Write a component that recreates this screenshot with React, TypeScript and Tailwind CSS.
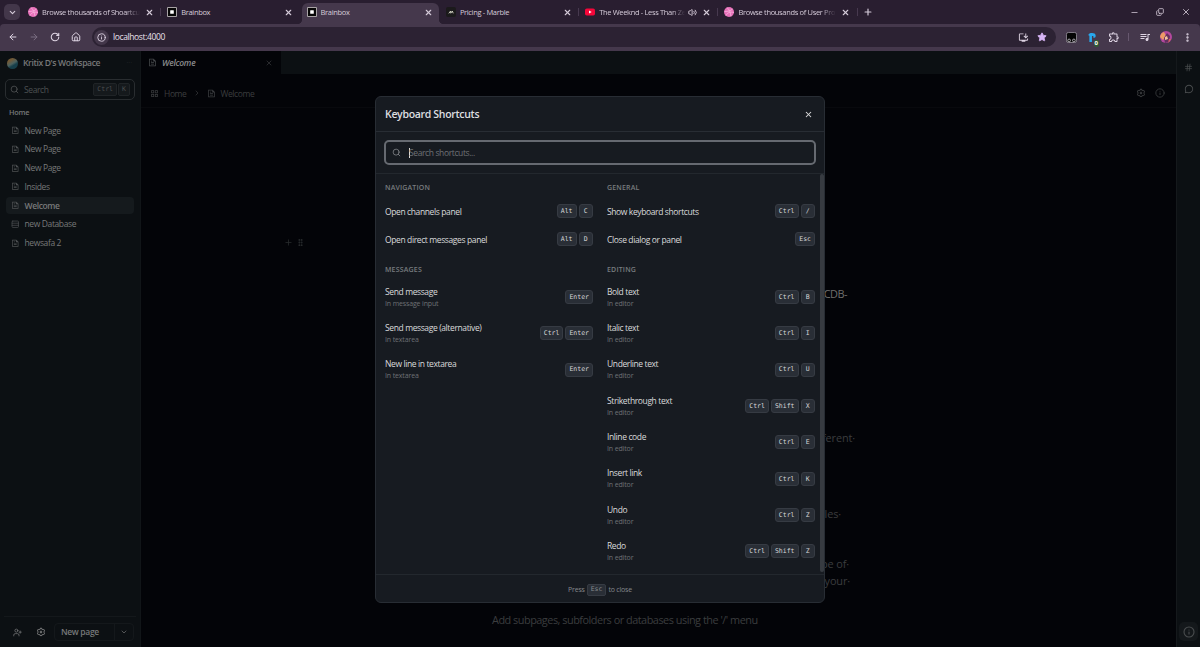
import type { ReactNode } from "react";
import clsx from "clsx";
import {
    ArrowLeft,
    ArrowRight,
    ChevronDown,
    ChevronRight,
    Copy,
    EllipsisVertical,
    GripVertical,
    Hash,
    House,
    Info,
    Minus,
    Plus,
    RotateCw,
    Rows3,
    Search,
    Star,
    UserPlus,
    Volume2,
    X,
} from "lucide-react";
import { RiFileTextLine, RiFunctionLine, RiSettings3Line, RiChat3Line } from "react-icons/ri";
import { MdOutlineInstallDesktop, MdOutlineExtension, MdQueueMusic } from "react-icons/md";

type Shortcut = { label: string; hint?: string; keys: string[] };
type Section = { title: string; items: Shortcut[] };

const leftSections: Section[] = [
    {
        title: "NAVIGATION",
        items: [
            { label: "Open channels panel", keys: ["Alt", "C"] },
            { label: "Open direct messages panel", keys: ["Alt", "D"] },
        ],
    },
    {
        title: "MESSAGES",
        items: [
            { label: "Send message", hint: "In message input", keys: ["Enter"] },
            { label: "Send message (alternative)", hint: "In textarea", keys: ["Ctrl", "Enter"] },
            { label: "New line in textarea", hint: "In textarea", keys: ["Enter"] },
        ],
    },
];

const rightSections: Section[] = [
    {
        title: "GENERAL",
        items: [
            { label: "Show keyboard shortcuts", keys: ["Ctrl", "/"] },
            { label: "Close dialog or panel", keys: ["Esc"] },
        ],
    },
    {
        title: "EDITING",
        items: [
            { label: "Bold text", hint: "In editor", keys: ["Ctrl", "B"] },
            { label: "Italic text", hint: "In editor", keys: ["Ctrl", "I"] },
            { label: "Underline text", hint: "In editor", keys: ["Ctrl", "U"] },
            { label: "Strikethrough text", hint: "In editor", keys: ["Ctrl", "Shift", "X"] },
            { label: "Inline code", hint: "In editor", keys: ["Ctrl", "E"] },
            { label: "Insert link", hint: "In editor", keys: ["Ctrl", "K"] },
            { label: "Undo", hint: "In editor", keys: ["Ctrl", "Z"] },
            { label: "Redo", hint: "In editor", keys: ["Ctrl", "Shift", "Z"] },
        ],
    },
];

const pages = [
    { name: "New Page" },
    { name: "New Page" },
    { name: "New Page" },
    { name: "Insides" },
    { name: "Welcome", active: true },
    { name: "new Database", database: true },
    { name: "hewsafa 2" },
];

function DribbbleIcon() {
    return (
        <svg viewBox="0 0 20 20" className="size-[10px]">
            <circle cx="10" cy="10" r="10" fill="#e871ba" />
            <path d="M6 1c5 5 7 10 8 18M1 9c7 0 12-1 16-5M4 17c3-6 8-8 16-6" fill="none" stroke="#f7b4dd" strokeWidth="1.6" />
        </svg>
    );
}

function BrainboxIcon() {
    return (
        <svg viewBox="0 0 10 10" className="size-[10px]">
            <rect width="10" height="10" rx="1" fill="#a9a4a6" />
            <rect x="1" y="1" width="8" height="8" fill="#070707" />
            <rect x="3.2" y="3.2" width="3.6" height="3.6" rx="0.5" fill="#fff" />
        </svg>
    );
}

function MarbleIcon() {
    return (
        <svg viewBox="0 0 10 10" className="size-[10px]">
            <rect width="10" height="10" rx="2" fill="#1b1a1b" />
            <path d="M2.8 6.4 4.6 4 4.8 6.2 6.3 4 7.2 6.3" fill="none" stroke="#d8d8c8" strokeWidth="0.9" />
        </svg>
    );
}

function YoutubeIcon() {
    return (
        <svg viewBox="0 0 10 10" className="size-[10px]">
            <rect y="1.5" width="10" height="7" rx="1.8" fill="#f5073a" />
            <path d="M4 3.4 6.7 5 4 6.6z" fill="#fff" />
        </svg>
    );
}

const browserTabs: { icon: ReactNode; title: string; active?: boolean; audio?: boolean; divider?: boolean; fade?: boolean }[] = [
    { icon: <DribbbleIcon />, title: "Browse thousands of Shoartcut", divider: true, fade: true },
    { icon: <BrainboxIcon />, title: "Brainbox" },
    { icon: <BrainboxIcon />, title: "Brainbox", active: true },
    { icon: <MarbleIcon />, title: "Pricing - Marble", divider: true },
    { icon: <YoutubeIcon />, title: "The Weeknd - Less Than Zer", audio: true, divider: true, fade: true },
    { icon: <DribbbleIcon />, title: "Browse thousands of User Profi", divider: true, fade: true },
];

function TabStrip() {
    return (
        <div className="flex h-6 items-stretch bg-[#291e30] text-[#d5cbd9]">
            <div className="flex w-[22px] items-center pl-1">
                <div className="flex size-4 items-center justify-center rounded-[5px] bg-[#43374a]">
                    <ChevronDown className="size-[9px]" strokeWidth={3} />
                </div>
            </div>
            {browserTabs.map((tab, i) => (
                <div key={i} className="relative flex w-[139.3px] shrink-0 items-center pl-[6px]">
                    {tab.active && (
                        <>
                            <div className="absolute top-[3px] bottom-0 left-px w-[137px] rounded-t-[6px] bg-[#45384c]" />
                            <div className="absolute bottom-0 left-[-4px] size-[5px] bg-[radial-gradient(circle_at_0_0,#291e30_5px,#45384c_5.5px)]" />
                            <div className="absolute bottom-0 left-[138px] size-[5px] bg-[radial-gradient(circle_at_100%_0,#291e30_5px,#45384c_5.5px)]" />
                        </>
                    )}
                    <div className="relative">{tab.icon}</div>
                    <span
                        className={clsx(
                            "relative ml-[4px] overflow-hidden text-[7.5px] leading-3 tracking-[-0.045em] whitespace-nowrap",
                            tab.audio ? "w-[86px]" : "w-[98px]",
                            tab.fade && "[mask-image:linear-gradient(to_right,#000_85%,transparent)]"
                        )}
                    >
                        {tab.title}
                    </span>
                    {tab.audio && <Volume2 className="ml-[3px] size-[9px]" strokeWidth={2.5} />}
                    <X className="relative ml-[5px] size-[9px]" strokeWidth={3} />
                    {tab.divider && <div className="absolute top-2 right-0 h-2 w-px bg-[#47394f]" />}
                </div>
            ))}
            <div className="flex flex-1 items-center pl-[5px]">
                <Plus className="size-[10px]" strokeWidth={2.8} />
            </div>
            <div className="flex items-center gap-[17px] pr-[9px]">
                <Minus className="size-[9px]" />
                <Copy className="size-[8px] -scale-x-100 rotate-180" strokeWidth={2.4} />
                <X className="size-[10px]" />
            </div>
        </div>
    );
}

function Toolbar() {
    return (
        <div className="flex h-[27px] items-center rounded-t-[4px] bg-[#45384c] pb-px text-[#ded4e3]">
            <div className="flex w-[92px] items-center gap-[11px] pl-2">
                <ArrowLeft className="size-[10px]" strokeWidth={2.4} />
                <ArrowRight className="size-[10px] text-[#7b6e82]" strokeWidth={2.4} />
                <RotateCw className="size-[10px]" strokeWidth={2.6} />
                <House className="size-[10px]" strokeWidth={2.4} />
            </div>
            <div className="flex h-5 w-[964px] items-center rounded-full bg-[#2c2233] pr-[9px] pl-[2px]">
                <div className="flex size-[15px] items-center justify-center rounded-full bg-[#43374a]">
                    <Info className="size-[9px]" strokeWidth={2.4} />
                </div>
                <span className="ml-1 flex-1 text-[8.5px] leading-none tracking-[-0.045em] text-[#e8e0eb]">localhost:4000</span>
                <MdOutlineInstallDesktop className="size-[11px]" />
                <Star className="ml-2 size-[10px] fill-[#d7b5f5] text-[#d7b5f5]" />
            </div>
            <div className="flex flex-1 items-center pl-[10px]">
                <svg viewBox="0 0 12 12" className="size-[11px]">
                    <rect x="0.5" y="0.5" width="11" height="11" rx="2" fill="#050505" stroke="#8d8792" />
                    <circle cx="3.4" cy="9.2" r="1.5" fill="#111" stroke="#d6d0da" strokeWidth="0.8" />
                    <circle cx="8.6" cy="9.2" r="1.5" fill="#111" stroke="#d6d0da" strokeWidth="0.8" />
                </svg>
                <div className="relative ml-[10px] size-[11px]">
                    <svg viewBox="0 0 12 12" className="size-[11px]">
                        <path d="M1.5 3.5c0-2 2-2.5 4-2.5s4 .8 4 3-1.2 2.4-2.6 2.4v-2H5.4V11H2.6V4z" fill="#28a8ee" />
                    </svg>
                    <span className="absolute -right-[1px] -bottom-[4px] rounded-[2px] bg-[#315b35] px-px text-[6px] leading-[7px] font-bold text-white">0</span>
                </div>
                <MdOutlineExtension className="ml-[10px] size-[12px]" />
                <div className="ml-[8px] h-2 w-px bg-[#67586f]" />
                <MdQueueMusic className="ml-[10px] size-[12px]" />
                <svg viewBox="0 0 12 12" className="ml-[9px] size-[12px]">
                    <circle cx="6" cy="6" r="6" fill="#b3489e" />
                    <path d="M0 6a6 6 0 0 1 4-5l2 4-3 4z" fill="#ed9b65" />
                    <path d="M4 7 7 2l3 3-1 6-4 1z" fill="#643060" />
                    <path d="m5 6 2-1 1 3-3 1z" fill="#f4c29c" />
                    <path d="M9 8h2L8 12z" fill="#e36854" />
                </svg>
                <EllipsisVertical className="ml-[10px] size-[11px]" strokeWidth={3} />
            </div>
        </div>
    );
}

function Sidebar() {
    return (
        <aside className="flex w-[141px] shrink-0 flex-col border-r border-[#111518] bg-[#0c1013] text-[#777879]">
            <div className="flex h-6 items-center pl-[7px]">
                <div className="size-[11px] rounded-full bg-[linear-gradient(150deg,#725a37_25%,#4d6260_50%,#173f4b_65%)]" />
                <span className="mt-px ml-[5px] text-[8.6px] font-semibold tracking-[-0.045em]">Kritix D's Workspace</span>
                <span className="ml-auto pr-[8px] text-[7px] text-[#24282a]">···</span>
            </div>
            <div className="mx-[5px] mt-1 flex h-[21px] items-center rounded-[5px] border border-[#292d30] pr-[4px] pl-[4px]">
                <Search className="size-[9px] text-[#55585a]" />
                <span className="mt-px ml-[5px] flex-1 text-[8.5px] tracking-[-0.045em] text-[#4d5052]">Search</span>
                <kbd className="flex h-[13px] items-center rounded-[2px] border border-[#202427] bg-[#15191c] px-[3px] font-['DejaVu_Sans_Mono',monospace] text-[6.5px] text-[#4b4e50]">Ctrl</kbd>
                <kbd className="ml-px flex h-[13px] w-[12px] items-center justify-center rounded-[2px] border border-[#202427] bg-[#15191c] font-['DejaVu_Sans_Mono',monospace] text-[6.5px] text-[#4b4e50]">K</kbd>
            </div>
            <div className="mt-[6px] h-[12px] pl-[9px] text-[7.3px] leading-3 font-semibold tracking-[-0.03em]">Home</div>
            <nav className="mt-[4px] flex-1 px-[6px]">
                {pages.map((page, i) => (
                    <div
                        key={i}
                        className={clsx("mb-[2px] flex h-[16.75px] items-center rounded-[4px] pl-[5px]", page.active && "bg-[#151a1d] font-semibold")}
                    >
                        {page.database ? (
                            <Rows3 className="size-[8.5px] text-[#4d5052]" />
                        ) : (
                            <RiFileTextLine className="size-[8.5px] text-[#4d5052]" />
                        )}
                        <span className="mt-px ml-[5px] text-[8.5px] tracking-[-0.045em]">{page.name}</span>
                    </div>
                ))}
            </nav>
            <div className="mx-[4px] flex h-[31px] items-center border-t border-[#14181b]">
                <UserPlus className="ml-[9px] size-[9px]" />
                <RiSettings3Line className="ml-[14px] size-[10px]" />
                <div className="ml-[8px] flex h-[18px] w-[80px] items-center rounded-[4px] border border-[#14181b] pl-[6px]">
                    <span className="mt-px text-[8.5px] font-semibold tracking-[-0.04em]">New page</span>
                    <div className="ml-auto flex h-full w-[19px] items-center justify-center border-l border-[#14181b]">
                        <ChevronDown className="size-[8px]" />
                    </div>
                </div>
            </div>
        </aside>
    );
}

function Editor() {
    return (
        <main className="flex min-w-0 flex-1 flex-col bg-[#030408] text-[#3b3d3f]">
            <div className="flex h-[23px] bg-[#0c1013]">
                <div className="flex w-[140px] items-center bg-[#030408] pr-[8px] pl-[7px]">
                    <RiFileTextLine className="size-[9px] text-[#47494b]" />
                    <span className="mt-[2px] ml-[5px] flex-1 text-[8.5px] font-semibold tracking-[-0.03em] text-[#8b8c8d] italic">Welcome</span>
                    <X className="size-[8px]" />
                </div>
            </div>
            <div className="flex h-[34px] items-center border-b border-[#08090d] pt-[5px] pr-[11px] pl-[9px] text-[8.5px] tracking-[-0.045em]">
                <RiFunctionLine className="size-[9px]" />
                <span className="mt-[2px] ml-[5px]">Home</span>
                <ChevronRight className="ml-[6px] size-[8px]" />
                <RiFileTextLine className="ml-[6px] size-[9px]" />
                <span className="mt-[2px] ml-[5px] flex-1">Welcome</span>
                <RiSettings3Line className="size-[10px]" />
                <Info className="ml-[9px] size-[10px]" />
            </div>
            <div className="flex flex-1">
                <div className="mt-[129px] flex h-[10px] w-[351px] items-center pl-[143px] text-[#292c2e]">
                    <Plus className="size-[9px]" />
                    <GripVertical className="ml-[3px] size-[9px]" strokeWidth={3} />
                </div>
                <div className="flex w-[364px] flex-col text-[10.9px] leading-[17px] tracking-[-0.045em]">
                    <p className="mt-[177px] pr-[9px] text-right text-[#706e6c]">CDB-</p>
                    <p className="mt-[127px] pr-[1px] text-right tracking-[-0.01em]">different·</p>
                    <p className="mt-[59px] pr-[15px] text-right tracking-[-0.01em]">files·</p>
                    <p className="mt-[33px] pr-[7px] text-right tracking-[-0.01em]">type of·</p>
                    <p className="pr-[6px] text-right tracking-[-0.01em]">your·</p>
                    <p className="mt-[22px] whitespace-nowrap">Add subpages, subfolders or databases using the '/' menu</p>
                </div>
            </div>
        </main>
    );
}

function RightRail() {
    return (
        <aside className="flex w-6 shrink-0 flex-col items-center border-l border-[#15191c] bg-[#0c1013] pt-[12px] text-[#4a4d4f]">
            <Hash className="size-[9px]" />
            <RiChat3Line className="mt-[12px] size-[10px]" />
            <div className="mt-auto mb-[6px] flex size-[19px] items-center justify-center rounded-[5px] bg-[#14181b]">
                <Info className="size-[12px]" strokeWidth={2.2} />
            </div>
        </aside>
    );
}

function Kbd({ children }: { children: ReactNode }) {
    return (
        <kbd className="flex h-[14px] min-w-[14.5px] items-center justify-center rounded-[3px] border border-[#363b43] bg-[#292e36] px-[3px] font-['DejaVu_Sans_Mono',monospace] text-[6.5px] leading-none text-[#d5d6d8]">
            {children}
        </kbd>
    );
}

function ShortcutSection({ section }: { section: Section }) {
    return (
        <section>
            <h3 className="h-[9px] text-[7px] leading-[9px] font-semibold tracking-[0.025em] text-[#787b7f]">{section.title}</h3>
            <div className="mt-[5px]">
                {section.items.map((item) => (
                    <div key={item.label} className={clsx("flex items-center justify-between", item.hint ? "h-[36.35px]" : "h-[28.2px]")}>
                        <div>
                            <div className="text-[8.5px] leading-[11px] tracking-[-0.045em] text-[#d9dadb]">{item.label}</div>
                            {item.hint && <div className="mt-px text-[7px] leading-[11px] tracking-[-0.02em] text-[#6e7175]">{item.hint}</div>}
                        </div>
                        <div className="flex gap-[2px]">
                            {item.keys.map((key) => (
                                <Kbd key={key}>{key}</Kbd>
                            ))}
                        </div>
                    </div>
                ))}
            </div>
        </section>
    );
}

function ShortcutsDialog() {
    return (
        <div className="absolute top-[96px] left-[375px] flex h-[507px] w-[450px] flex-col rounded-[6px] border border-[#282d34] bg-[#171b21]">
            <header className="flex h-[35px] shrink-0 items-center justify-between border-b border-[#282d34] pr-[11px] pl-[9px]">
                <h2 className="mt-px text-[10.5px] font-semibold tracking-[-0.03em] text-[#dedfe0]">Keyboard Shortcuts</h2>
                <X className="size-[9px] text-[#d9dadb]" strokeWidth={2.8} />
            </header>
            <div className="h-[42px] shrink-0 border-b border-[#23282e] px-[8px] pt-[8px]">
                <div className="flex h-[25px] items-center rounded-[5px] border-2 border-[#666a71] pl-[6px]">
                    <Search className="size-[9px] text-[#8b8e92]" />
                    <div className="ml-[8px] h-[10px] w-px bg-[#d9dadb]" />
                    <span className="mt-px -ml-px text-[8.5px] tracking-[-0.045em] text-[#6e7175]">Search shortcuts...</span>
                </div>
            </div>
            <div className="flex flex-1 pl-[9px]">
                <div className="grid flex-1 grid-cols-[208px_208px] gap-x-[14px] pt-[9px]">
                    <div className="flex flex-col gap-[11.5px]">
                        {leftSections.map((section) => (
                            <ShortcutSection key={section.title} section={section} />
                        ))}
                    </div>
                    <div className="flex flex-col gap-[11.5px]">
                        {rightSections.map((section) => (
                            <ShortcutSection key={section.title} section={section} />
                        ))}
                    </div>
                </div>
                <div className="mb-[2px] w-[4px] rounded-full bg-[#373b41]" />
            </div>
            <footer className="flex h-[28px] shrink-0 items-center justify-center gap-[2px] border-t border-[#23282e] pt-[3px] text-[7px] tracking-[-0.03em] text-[#85888c]">
                Press
                <kbd className="flex h-[12px] items-center rounded-[2px] border border-[#363b43] bg-[#292e36] px-[3px] font-['DejaVu_Sans_Mono',monospace] text-[6.5px] tracking-normal">Esc</kbd>
                to close
            </footer>
        </div>
    );
}

export default function App() {
    return (
        <div className="relative flex h-[647px] w-[1200px] flex-col overflow-hidden bg-[#291e30] font-['Open_Sans','Noto_Sans',sans-serif]">
            <TabStrip />
            <Toolbar />
            <div className="flex min-h-0 flex-1">
                <Sidebar />
                <Editor />
                <RightRail />
            </div>
            <ShortcutsDialog />
        </div>
    );
}
